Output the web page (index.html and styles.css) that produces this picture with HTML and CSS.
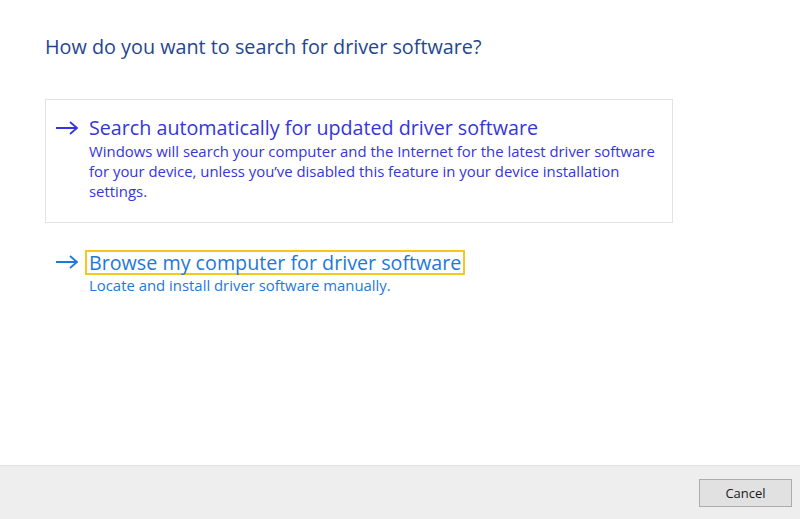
FILE: index.html
```html
<!DOCTYPE html>
<html>
<head>
<meta charset="utf-8">
<link rel="stylesheet" href="styles.css">
</head>
<body>
<div class="page">
  <main class="content">
    <h1 class="title">How do you want to search for driver software?</h1>
    <div class="option option-boxed">
      <svg class="arrow" width="24" height="16" viewBox="0 0 24 16"><path d="M1 8 H22 M15 2 L22 8 L15 14" fill="none" stroke="currentColor" stroke-width="1.8"/></svg>
      <div class="option-text">
        <div class="option-title">Search automatically for updated driver software</div>
        <div class="option-desc">Windows will search your computer and the Internet for the latest driver software for your device, unless you’ve disabled this feature in your device installation settings.</div>
      </div>
    </div>
    <div class="option option-focus">
      <svg class="arrow" width="24" height="16" viewBox="0 0 24 16"><path d="M1 8 H22 M15 2 L22 8 L15 14" fill="none" stroke="currentColor" stroke-width="1.8"/></svg>
      <div class="option-text">
        <div class="option-title option-title-focus"><span class="focus-ring">Browse my computer for driver software</span></div>
        <div class="option-desc">Locate and install driver software manually.</div>
      </div>
    </div>
  </main>
  <footer class="footer">
    <button class="btn">Cancel</button>
  </footer>
</div>
</body>
</html>
```
FILE: styles.css
```css
html, body {
  margin: 0;
  padding: 0;
  background: #ffffff;
}
.page {
  width: 800px;
  height: 519px;
  display: flex;
  flex-direction: column;
  font-family: "Open Sans", "Noto Sans", sans-serif;
}
.content {
  flex: 1;
  padding: 33px 0 0 45px;
}
.title {
  margin: 0;
  font-size: 19.8px;
  font-weight: 400;
  color: #24468f;
  line-height: 28px;
}
.option {
  display: flex;
  align-items: flex-start;
}
.option-boxed {
  margin-top: 38px;
  width: 628px;
  height: 124px;
  box-sizing: border-box;
  border: 1px solid #e3e3e3;
  padding: 15px 0 0 9px;
  color: #3535dc;
}
.option-focus {
  margin-top: 27px;
  padding-left: 10px;
  color: #1f78d6;
}
.arrow {
  flex: none;
  margin-top: 5px;
  margin-right: 10px;
}
.option-focus .arrow {
  margin-top: 4px;
}
.option-title {
  font-size: 19.7px;
  line-height: 26px;
}
.option-title-focus {
  display: flex;
}
.option-desc {
  font-size: 14.9px;
  line-height: 20px;
  width: 572px;
}
.focus-ring {
  display: block;
  border: 2px solid #f6c71e;
  padding: 0 2px;
  margin-left: -4px;
  line-height: 21px;
}
.footer {
  flex: none;
  height: 54px;
  background: #eeeeee;
  border-top: 1px solid #e2e2e2;
  display: flex;
  justify-content: flex-end;
  align-items: flex-start;
  padding: 13px 8px 0 0;
  box-sizing: border-box;
}
.btn {
  width: 93px;
  height: 28px;
  background: #e1e1e1;
  border: 1px solid #adadad;
  font-family: "Open Sans", "Noto Sans", sans-serif;
  font-size: 13px;
  color: #1a1a1a;
  padding: 0;
}
```
